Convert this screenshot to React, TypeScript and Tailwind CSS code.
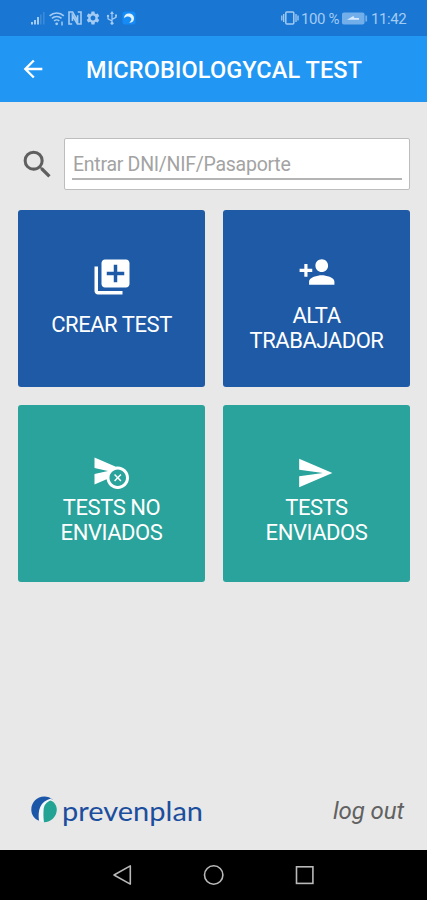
import type { ReactNode } from "react"
import {
  MdArrowBack,
  MdCancelScheduleSend,
  MdLibraryAdd,
  MdPersonAdd,
  MdSearch,
  MdSend,
  MdSettings,
} from "react-icons/md"

type TileProps = {
  icon: ReactNode
  lines: string[]
  className: string
}

function StatusBar() {
  return (
    <div className="flex h-9 items-center bg-[#1976d2] pl-[31px] pr-[20px] text-[#a3cbf3]">
      <svg width="14" height="14" viewBox="0 0 14 14" fill="currentColor">
        <rect x="0" y="11" width="2" height="2.5" />
        <rect x="3" y="9" width="2" height="4.5" />
        <rect x="6" y="6" width="2" height="7.5" />
        <rect x="9" y="3.5" width="1.6" height="10" opacity="0.25" />
        <rect x="12" y="1" width="1.6" height="12.5" opacity="0.25" />
      </svg>
      <svg className="ml-1" width="16" height="15" viewBox="0 0 16 15" fill="none" stroke="currentColor" strokeWidth="1.6">
        <path d="M.6 4.8a10.4 10.4 0 0 1 14.2 0M2.9 7.4a7 7 0 0 1 9.6 0M5.1 10a3.7 3.7 0 0 1 5.2 0" />
        <circle cx="7.7" cy="12.8" r="1.4" fill="currentColor" stroke="none" />
        <path d="M13 10.5v4" strokeWidth="1.5" />
      </svg>
      <svg className="ml-[3px]" width="14" height="14" viewBox="0 0 14 14" fill="none" stroke="currentColor" strokeWidth="1.6">
        <path d="M4.2 13H1V1H4.6L9.6 10V4.2M9.8 1H13V13H9.4L4.4 4.5V10" />
      </svg>
      <MdSettings className="ml-[3px]" size={16} />
      <svg className="ml-[5px]" width="12" height="14" viewBox="0 0 12 14" fill="none" stroke="currentColor" strokeWidth="1.2">
        <path d="M6 2v10M6 10L2 7.8V5M6 8.4l4-2V4.6" />
        <path d="M6 0L4 3h4z" fill="currentColor" stroke="none" />
        <circle cx="6" cy="12.3" r="1.5" fill="currentColor" stroke="none" />
        <circle cx="2" cy="5" r="1.2" fill="currentColor" stroke="none" />
        <path d="M9 3.4h2v2H9z" fill="currentColor" stroke="none" />
      </svg>
      <svg className="ml-1" width="14" height="14" viewBox="0 0 14 14">
        <rect x="0.5" y="0.5" width="13" height="13" rx="2.5" fill="#168af5" />
        <path d="M2 7.2C2 3.6 5 1.8 8 2.6c3.6.9 4.8 4.4 3.5 7-.8 1.7-2.6 2.4-4.3 2C9.6 10 10 7.5 8.5 6.4 6.5 5 4 5.5 2 7.2z" fill="#e4f4ff" />
      </svg>

      <div className="ml-auto flex items-center font-['Roboto',sans-serif] text-[15px] leading-none">
        <svg width="18" height="14" viewBox="0 0 18 14" fill="none" stroke="currentColor" strokeWidth="1.5">
          <rect x="4.8" y="1" width="8" height="12" rx="1" />
          <path d="M2.7 3v8M.8 4.5v5M15 3v8M17 4.5v5" strokeWidth="1.3" />
        </svg>
        <span className="ml-[2px] w-[38px] whitespace-nowrap pt-[2px] tracking-[-0.4px]">100 %</span>
        <svg className="ml-[3px]" width="26" height="13" viewBox="0 0 26 13">
          <rect x="0" y="0.5" width="22.5" height="12" rx="1.8" fill="#72aeea" />
          <rect x="23.3" y="3.5" width="1.8" height="6" fill="#72aeea" />
          <path d="M5 7.8l6.3-3.8 1.2 2h4.5v1.8z" fill="#d6eaff" />
        </svg>
        <span className="ml-[3px] w-[36px] whitespace-nowrap pt-[2px] tracking-[-0.4px]">11:42</span>
      </div>
    </div>
  )
}

function Tile({ icon, lines, className }: TileProps) {
  return (
    <button
      className={`flex h-[177.5px] flex-col items-center rounded-[3px] text-[22px] leading-[25px] tracking-[-0.45px] text-white ${className}`}
    >
      {icon}
      {lines.map((line) => (
        <span key={line} className="whitespace-nowrap">{line}</span>
      ))}
    </button>
  )
}

function Logo() {
  return (
    <svg width="174" height="40" viewBox="0 0 174 40" role="img" aria-label="prevenplan">
      {/* Blue crescent, white stem, green leaf */}
      <path d="M7 28.2C2.9 26.3.3 22.2.3 17.5.3 10.3 6 4.5 13.2 4.5c3.2 0 6.2 1.2 8.4 3.2L14 13 9 29z" fill="#1b57a8" />
      <path d="M8 28.8C6.7 18 9 9.500 19.800 6.500L22 8.500 14.500 16 12.8 30C11 29.9 9.500 29.500 8 28.800z" fill="#f4f7fa" />
      <path d="M13 30.200C12.400 26 12.300 22 12.600 17.500 13 13 15.400 9.800 19.800 8.400c3.700 1.700 6 5.200 6 9.100 0 7-5.700 12.700-12.800 12.700z" fill="#23a393" />
      <text
        x="31"
        y="28.8"
        textLength="141"
        lengthAdjust="spacingAndGlyphs"
        className="fill-[#1c4e9e] font-['Lato',sans-serif] text-[27px]"
      >
        prevenplan
      </text>
    </svg>
  )
}

function NavBar() {
  return (
    <nav className="flex h-[50.5px] items-center justify-center bg-black text-[#b9b9b9]">
      <svg width="91" height="22" viewBox="0 0 91 22" fill="none" stroke="currentColor" strokeWidth="1.6">
        <path d="M53.3 1.9v18.2L37 11z" strokeLinejoin="round" />
      </svg>
      <svg width="91" height="22" viewBox="0 0 91 22" fill="none" stroke="currentColor" strokeWidth="1.6">
        <circle cx="45.7" cy="11" r="9.2" />
      </svg>
      <svg width="91" height="22" viewBox="0 0 91 22" fill="none" stroke="currentColor" strokeWidth="1.6">
        <rect x="37.5" y="2.8" width="16.4" height="16.6" />
      </svg>
    </nav>
  )
}

export default function App() {
  return (
    <div className="flex h-[900px] w-[427px] flex-col overflow-hidden bg-[#e8e8e8] font-['Roboto',sans-serif]">
      <StatusBar />
      <header className="flex h-[66px] items-center bg-[#2196f3] pl-[19px] text-white">
        <MdArrowBack size={28} />
        <h1 className="ml-[39px] whitespace-nowrap pt-[3px] text-[23.5px] font-medium tracking-[0.08px]">
          MICROBIOLOGYCAL TEST
        </h1>
      </header>

      <main className="flex flex-1 flex-col">
        <div className="mt-9 flex h-[52px] items-center pl-[19px] pr-[17px]">
          <MdSearch size={37} className="shrink-0 text-[#5f5f5f]" />
          <div className="ml-2 h-full flex-1 rounded-[2px] border border-[#bdbdbd] bg-white px-[7px] pt-[9px]">
            <input
              className="block h-[32px] w-full border-b-2 border-[#b4b4b4] pl-px pt-[3px] text-[19.5px] tracking-[-0.27px] outline-none placeholder:text-[#a3a3a3]"
              placeholder="Entrar DNI/NIF/Pasaporte"
            />
          </div>
        </div>

        {/* Main actions */}
        <div className="mt-[19.5px] grid grid-cols-2 gap-x-[18px] gap-y-[17.5px] pl-[18px] pr-[17px]">
          <Tile
            className="bg-[#1e5aa6] pt-[46px]"
            icon={<MdLibraryAdd size={42} className="mb-[14px]" />}
            lines={["CREAR TEST"]}
          />
          <Tile
            className="bg-[#1e5aa6] pt-[43px]"
            icon={<MdPersonAdd size={38} className="mb-[12px]" />}
            lines={["ALTA", "TRABAJADOR"]}
          />
          <Tile
            className="bg-[#29a39b] pt-[48px]"
            icon={<MdCancelScheduleSend size={36} className="-ml-px mb-[6.5px]" />}
            lines={["TESTS NO", "ENVIADOS"]}
          />
          <Tile
            className="bg-[#29a39b] pt-[49px]"
            icon={<MdSend size={38} className="-ml-[3px] mb-[3.5px]" />}
            lines={["TESTS", "ENVIADOS"]}
          />
        </div>

        <footer className="mb-[18px] mt-auto flex items-center justify-between pl-[31px] pr-[23px]">
          <Logo />
          <button className="pb-px text-[24px] italic leading-none tracking-[-0.1px] text-[#616161]">log out</button>
        </footer>
      </main>

      <NavBar />
    </div>
  )
}
